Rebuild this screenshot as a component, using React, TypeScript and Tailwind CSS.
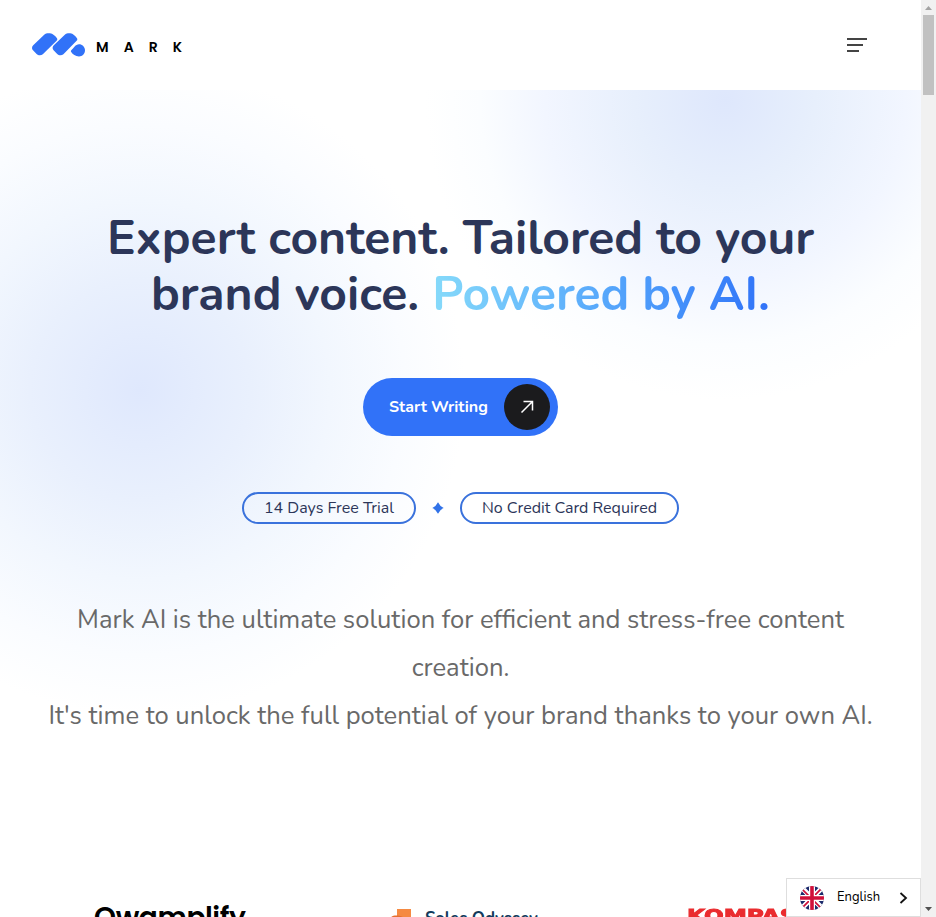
import React from "react";

function Logo() {
  return (
    <a className="flex items-center gap-[10px]" aria-label="Mark">
      <svg width="54" height="26" viewBox="0 0 54 26">
        <g fill="#3172f8">
          <path d="M1.2 13.300 12.200 2.700C13.600 1.400 15.800 1 18 1.300c2.800.5 5 2.400 6.800 4.700.8 1.100.7 1.900-.2 2.800L10.800 22.200c-1.600 1.500-4.600 1.500-6.200-.2L1 18.300c-1.400-1.500-1.300-3.500.2-5z" />
          <path d="M21.800 13.300 32.800 2.700C34.200 1.400 36.400 1 38.300 1.300c2.800.5 4.700 2.400 6.500 4.700.8 1.100.7 1.900-.2 2.800L31.400 22.200c-1.600 1.500-4.600 1.500-6.200-.2l-3.600-3.700c-1.400-1.500-1.300-3.500.2-5z" />
          <path d="M39.500 18c2-1.800 4-5.800 7.500-5.800 3.300 0 6 2.700 6 6.100s-2.700 6.200-6 6.200c-3.600 0-6.300-2.200-7.800-4.500-.5-.8-.4-1.400.3-2z" />
        </g>
      </svg>
      <span className="flex w-[86px] justify-between pt-[3px] font-['Poppins','Nunito',sans-serif] text-[14px] font-semibold leading-none text-black">
        <span>M</span>
        <span>A</span>
        <span>R</span>
        <span>K</span>
      </span>
    </a>
  );
}

function Flag() {
  return (
    <svg width="24" height="24" viewBox="0 0 24 24">
      <defs>
        <clipPath id="round">
          <circle cx="12" cy="12" r="12" />
        </clipPath>
      </defs>
      <g clipPath="url(#round)">
        <path fill="#1b2a6b" d="M0 0h24v24H0z" />
        <path stroke="#fff" strokeWidth="5" d="m0 0 24 24M24 0 0 24" />
        <path stroke="#d0103a" strokeWidth="1.700" d="m0 1 24 24M24 0 0 24" />
        <path stroke="#fff" strokeWidth="6" d="M12 0v24M0 12h24" />
        <path stroke="#d0103a" strokeWidth="3.600" d="M12 0v24M0 12h24" />
      </g>
    </svg>
  );
}

function Scrollbar() {
  return (
    <div className="flex w-[15px] shrink-0 flex-col items-center justify-between bg-[#f1f1f1]">
      <div className="flex flex-col items-center">
        <svg width="15" height="15" viewBox="0 0 15 15">
          <path fill="#a3a3a3" d="M4 10h7L7.500 6z" />
        </svg>
        <div className="h-20 w-[11px] bg-[#c1c1c1]" />
      </div>
      <svg width="15" height="15" viewBox="0 0 15 15">
        <path fill="#505050" d="M4 5h7L7.500 9z" />
      </svg>
    </div>
  );
}

export default function App() {
  return (
    <div className="relative flex h-[917px] w-[936px] overflow-hidden bg-white font-['Nunito','Open_Sans',sans-serif]">
      <div className="flex min-w-0 flex-1 flex-col">
        <header className="flex h-[90px] shrink-0 items-center justify-between pl-8 pr-[54px]">
          <Logo />
          <button className="flex w-5 flex-col gap-1" aria-label="Menu">
            <span className="h-[2px] w-5 bg-[#444]" />
            <span className="h-[2px] w-4 bg-[#444]" />
            <span className="h-[2px] w-3 bg-[#444]" />
          </button>
        </header>

        <main className="flex h-[827px] shrink-0 flex-col items-center bg-[radial-gradient(circle_at_140px_300px,#dfe8fd_0px,#e9f0fd_110px,#f2f7fe_190px,#fafcff_265px,rgba(255,255,255,0)_325px),radial-gradient(circle_at_725px_10px,#dee7fc_0px,#e7effc_90px,#f2f6ff_180px,#fbfdff_245px,#ffffff_300px)] pt-[120px]">
          <h1 className="w-[760px] whitespace-nowrap text-center text-[48px] font-bold leading-[56px] text-[#2c3659]">
            Expert content. Tailored to your
            <br />
            brand voice.{" "}
            <span className="bg-gradient-to-r from-[#86dafa] to-[#3172f8] bg-clip-text text-transparent">Powered by AI.</span>
          </h1>

          <button className="mt-14 flex h-[58px] w-[195px] shrink-0 items-center justify-between rounded-full bg-[#3172f8] pl-[26px] pr-2 text-base font-bold text-white">
            <span className="whitespace-nowrap">Start Writing</span>
            <span className="flex size-[46px] items-center justify-center rounded-full bg-[#1b1b1d]">
              <svg width="14" height="14" viewBox="0 0 14 14" fill="none" stroke="#fff" strokeWidth="1.500">
                <path d="M1.500 12.500 12 2M3.500 1.500h9v9" />
              </svg>
            </span>
          </button>

          <div className="mt-14 flex items-center whitespace-nowrap text-base text-[#2c3659]">
            <span className="flex h-8 w-[174px] items-center justify-center rounded-full border-2 border-[#3a72dc]">14 Days Free Trial</span>
            <svg className="mx-4" width="12" height="12" viewBox="0 0 12 12">
              <path fill="#3172e8" d="M6 .3Q8 4.500 11.700 6Q8 7.500 6 11.700Q4 7.500 .3 6Q4 4.500 6 .3z" />
            </svg>
            <span className="flex h-8 w-[219px] items-center justify-center rounded-full border-2 border-[#3a72dc]">No Credit Card Required</span>
          </div>

          <p className="mt-[72px] flex flex-col items-center whitespace-nowrap text-[25.6px] leading-[48px] text-[#696969]">
            <span>Mark AI is the ultimate solution for efficient and stress-free content</span>
            <span>creation.</span>
            <span>It's time to unlock the full potential of your brand thanks to your own AI.</span>
          </p>

          <div className="mt-[160px] flex w-full items-start whitespace-nowrap pl-[94px]">
            <span className="w-[295px] font-['Poppins','Inter',sans-serif] text-[28px] font-semibold leading-[35px] tracking-[-0.4px] text-black">Qwamplify</span>
            <span className="flex w-[298px] items-start gap-[14px] pt-2">
              <svg width="22" height="22" viewBox="0 0 22 22">
                <path fill="#f58a42" d="M8 1h14v21H14V10H8z" />
                <path fill="#e66f30" d="M1 10c3-3 7-3 13-1v4H1z" />
              </svg>
              <span className="pt-px font-['Nunito','Lato',sans-serif] text-[16.800px] font-bold leading-[20px] text-[#123b5c]">Sales Odyssey</span>
            </span>
            <span className="origin-left scale-x-[1.290] pt-[5px] font-['DejaVu_Sans',sans-serif] text-[18px] font-bold leading-[22px] text-[#ea2c2f] [-webkit-text-stroke:1px_#ea2c2f]">KOMPASS</span>
          </div>
        </main>
      </div>
      <Scrollbar />

      <div className="absolute left-[786px] top-[878px] flex h-[39px] w-[135px] items-center border border-[#dedede] bg-white pl-[13px] pr-3 text-[13px] text-black">
        <Flag />
        <span className="ml-[13px] flex-1">English</span>
        <svg width="9" height="14" viewBox="0 0 9 14" fill="none" stroke="#111" strokeWidth="1.800">
          <path d="m1.500 2 5.500 5-5.500 5" />
        </svg>
      </div>
    </div>
  );
}
